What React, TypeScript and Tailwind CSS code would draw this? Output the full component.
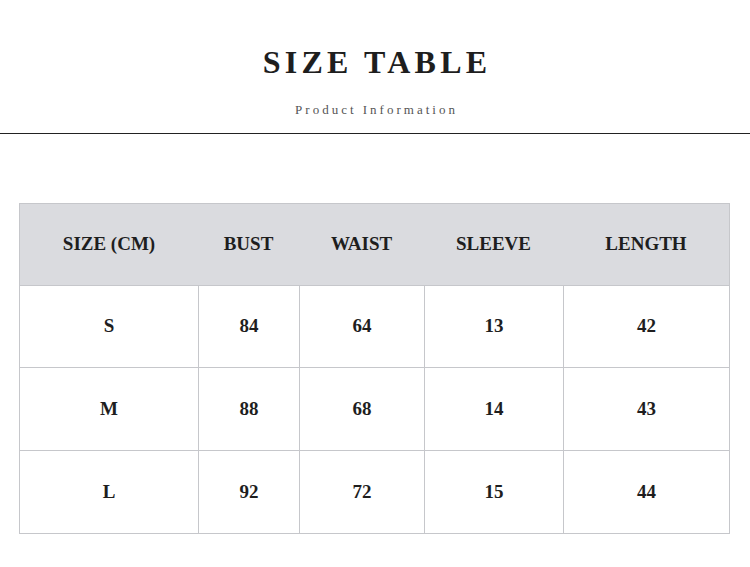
const headers = ["SIZE (CM)", "BUST", "WAIST", "SLEEVE", "LENGTH"];
const rows = [
  ["S", "84", "64", "13", "42"],
  ["M", "88", "68", "14", "43"],
  ["L", "92", "72", "15", "44"],
];

export default function App() {
  return (
    <div className="w-[750px] h-[567px] bg-white font-['Liberation_Serif',serif] text-[#1e1e1e]">
      <div className="pt-[42px] text-center">
        <h1 className="text-[32px] leading-[40px] font-bold tracking-[4.2px] pl-[4px]">SIZE TABLE</h1>
        <p className="mt-[20px] text-[13px] leading-[16px] tracking-[3px] pl-[3px] text-[#555]">Product Information</p>
      </div>
      <div className="mt-[15px] h-px bg-[#222]" />
      <div className="pt-[69px] px-[19px]">
        <div className="w-[711px] border border-[#c6c7cb] grid grid-cols-[178px_101px_125px_139px_1fr]">
          {headers.map((h) => (
            <div key={h} className="h-[81px] bg-[#dadbdf] flex items-center justify-center text-[19px] font-bold">
              {h}
            </div>
          ))}
          {rows.map((r, i) =>
            r.map((c, j) => (
              <div
                key={`${i}-${j}`}
                className={`${i === 0 ? "h-[82px]" : "h-[83px]"} flex items-center justify-center text-[19px] font-bold border-t border-[#c6c7cb] ${j > 0 ? "border-l" : ""}`}
              >
                {c}
              </div>
            ))
          )}
        </div>
      </div>
    </div>
  );
}
